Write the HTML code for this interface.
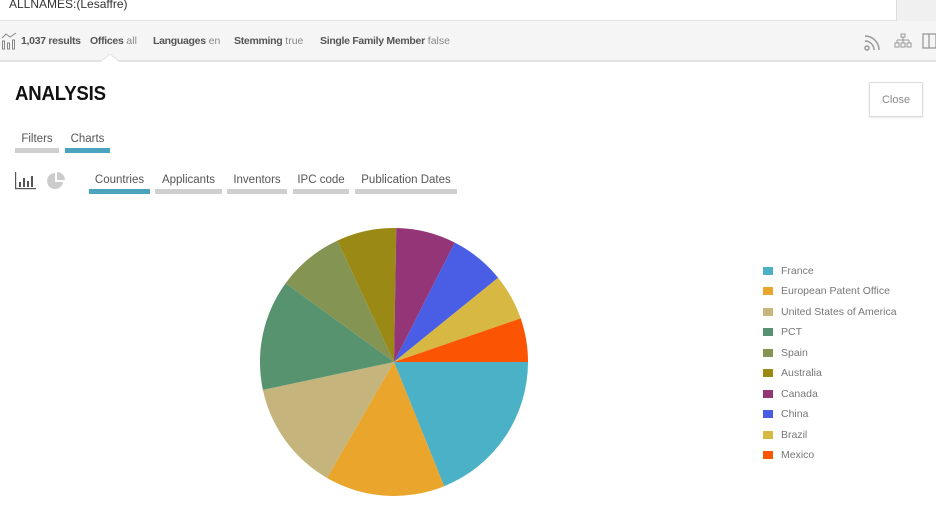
<!DOCTYPE html>
<html><head><meta charset="utf-8"><style>
*{margin:0;padding:0;box-sizing:border-box}
body{width:936px;height:524px;overflow:hidden;background:#fff;font-family:"Liberation Sans",sans-serif;color:#333;position:relative}
.top{position:absolute;left:0;top:0;width:936px;height:21px;background:#fff;border-bottom:1px solid #e2e2e2}
.top .q{position:absolute;left:9px;top:-3px;font-size:12px;color:#333}
.top .btn{position:absolute;left:896px;top:0;width:40px;height:21px;background:#f0f0f0;border-left:1px solid #ddd}
.bar{position:absolute;left:0;top:21px;width:936px;height:41px;background:#f5f5f5;border-bottom:2px solid #e2e2e2}
.bar span{position:absolute;top:14px;font-size:10.5px;color:#555}
.bar b{font-weight:bold;color:#555;letter-spacing:-.3px}
.bar i{font-style:normal;color:#888}
h1{position:absolute;left:15px;top:83px;font-size:20px;font-weight:bold;color:#111;letter-spacing:-.2px;transform:scaleX(.93);transform-origin:left}
.close{position:absolute;left:869px;top:82px;width:54px;height:35px;border:1px solid #ddd;box-shadow:0 1px 2px rgba(0,0,0,.1);font-size:11px;color:#888;text-align:center;line-height:34px}
.tab{position:absolute;font-size:11.5px;color:#555;text-align:center}
.ul{position:absolute;height:5px;background:#cfcfcf}
.ul.a{background:#4ba3bd}
.leg{position:absolute;left:763px;font-size:10.5px;color:#777}
.leg s{position:absolute;left:0;top:2px;width:10px;height:8px}
.leg span{position:absolute;left:18px;top:0;white-space:nowrap}
</style></head><body>
<div class="top"><div class="q">ALLNAMES:(Lesaffre)</div><div class="btn"></div></div>
<div class="bar">
<svg style="position:absolute;left:1px;top:11px" width="16" height="18" viewBox="0 0 16 18" fill="none" stroke="#888" stroke-width="1"><path d="M1 6 L5 2 L9 5 L15 1"/><rect x="1.5" y="9" width="2" height="8"/><rect x="6.5" y="11" width="2" height="6"/><rect x="11.5" y="8" width="2" height="9"/></svg>
<span style="left:21px"><b>1,037 results</b></span>
<span style="left:90px"><b>Offices</b> <i>all</i></span>
<span style="left:153px"><b>Languages</b> <i>en</i></span>
<span style="left:234px"><b>Stemming</b> <i>true</i></span>
<span style="left:320px"><b>Single Family Member</b> <i>false</i></span>
<svg style="position:absolute;left:863px;top:11px" width="20" height="20" viewBox="0 0 20 20" fill="none" stroke="#999" stroke-width="1.5"><circle cx="4" cy="16" r="2"/><path d="M2 9a9 9 0 0 1 9 9M2 4a14 14 0 0 1 14 14"/></svg>
<svg style="position:absolute;left:894px;top:12px" width="18" height="16" viewBox="0 0 18 16" fill="none" stroke="#999" stroke-width="1"><rect x="7" y="1" width="4" height="3"/><path d="M9 4v3M3 7h12M3 7v3M9 7v3M15 7v3"/><rect x="1" y="10" width="4" height="4"/><rect x="7" y="10" width="4" height="4"/><rect x="13" y="10" width="4" height="4"/></svg>
<svg style="position:absolute;left:922px;top:12px" width="14" height="16" viewBox="0 0 14 16" fill="none" stroke="#999" stroke-width="1.3"><rect x="1" y="1" width="13" height="14"/><path d="M7 1v14"/></svg>
<svg style="position:absolute;left:100px;top:33px" width="20" height="8" viewBox="0 0 20 8"><path d="M0 8 L10 0 L20 8" fill="#fff" stroke="#e2e2e2"/></svg>
</div>
<h1>ANALYSIS</h1>
<div class="close">Close</div>
<div class="tab" style="left:15px;top:133px;width:44px">Filters</div>
<div class="ul" style="left:15px;top:148px;width:44px"></div>
<div class="tab" style="left:65px;top:133px;width:45px">Charts</div>
<div class="ul a" style="left:65px;top:148px;width:45px"></div>
<svg style="position:absolute;left:15px;top:172px" width="22" height="18" viewBox="0 0 22 18" fill="#555"><rect x="0" y="0" width="1.2" height="17"/><rect x="0" y="16" width="21" height="1.2"/><rect x="4" y="10" width="2" height="5"/><rect x="8" y="6" width="2" height="9"/><rect x="12" y="9" width="2" height="6"/><rect x="16" y="4" width="2" height="11"/></svg>
<svg style="position:absolute;left:46px;top:172px" width="20" height="18" viewBox="0 0 20 18" fill="#ccc"><path d="M9 1 A8 8 0 1 0 17 10 L9 10Z"/><path d="M11 0 A8 8 0 0 1 19 8 L11 8Z"/></svg>
<div class="tab" style="left:89px;top:174px;width:61px">Countries</div><div class="ul a" style="left:89px;top:189px;width:61px"></div>
<div class="tab" style="left:155px;top:174px;width:67px">Applicants</div><div class="ul" style="left:155px;top:189px;width:67px"></div>
<div class="tab" style="left:227px;top:174px;width:60px">Inventors</div><div class="ul" style="left:227px;top:189px;width:60px"></div>
<div class="tab" style="left:293px;top:174px;width:56px">IPC code</div><div class="ul" style="left:293px;top:189px;width:56px"></div>
<div class="tab" style="left:355px;top:174px;width:102px">Publication Dates</div><div class="ul" style="left:355px;top:189px;width:102px"></div>
<svg style="position:absolute;left:0;top:0" width="936" height="524">
<g transform="translate(394,362)">
<path d="M0 0L134 0A134 134 0 0 1 50.2 124.2Z" fill="#4ab1c6"/>
<path d="M0 0L50.2 124.2A134 134 0 0 1 -67 116Z" fill="#e9a52c"/>
<path d="M0 0L-67 116A134 134 0 0 1 -131.1 27.9Z" fill="#c5b47c"/>
<path d="M0 0L-131.1 27.9A134 134 0 0 1 -108.4 -78.8Z" fill="#57936f"/>
<path d="M0 0L-108.4 -78.8A134 134 0 0 1 -56.6 -121.4Z" fill="#849453"/>
<path d="M0 0L-56.6 -121.4A134 134 0 0 1 2.3 -134Z" fill="#9a8a15"/>
<path d="M0 0L2.3 -134A134 134 0 0 1 60.8 -119.4Z" fill="#943578"/>
<path d="M0 0L60.8 -119.4A134 134 0 0 1 104.1 -84.3Z" fill="#4a5ee5"/>
<path d="M0 0L104.1 -84.3A134 134 0 0 1 126.7 -43.6Z" fill="#d7b842"/>
<path d="M0 0L126.7 -43.6A134 134 0 0 1 134 0Z" fill="#fb5503"/>
</g></svg>
<div class="leg" style="top:265px"><s style="background:#4ab1c6"></s><span>France</span></div>
<div class="leg" style="top:285px"><s style="background:#e9a52c"></s><span>European Patent Office</span></div>
<div class="leg" style="top:306px"><s style="background:#c5b47c"></s><span>United States of America</span></div>
<div class="leg" style="top:326px"><s style="background:#57936f"></s><span>PCT</span></div>
<div class="leg" style="top:347px"><s style="background:#849453"></s><span>Spain</span></div>
<div class="leg" style="top:367px"><s style="background:#9a8a15"></s><span>Australia</span></div>
<div class="leg" style="top:388px"><s style="background:#943578"></s><span>Canada</span></div>
<div class="leg" style="top:408px"><s style="background:#4a5ee5"></s><span>China</span></div>
<div class="leg" style="top:429px"><s style="background:#d7b842"></s><span>Brazil</span></div>
<div class="leg" style="top:449px"><s style="background:#fb5503"></s><span>Mexico</span></div>
</body></html>
